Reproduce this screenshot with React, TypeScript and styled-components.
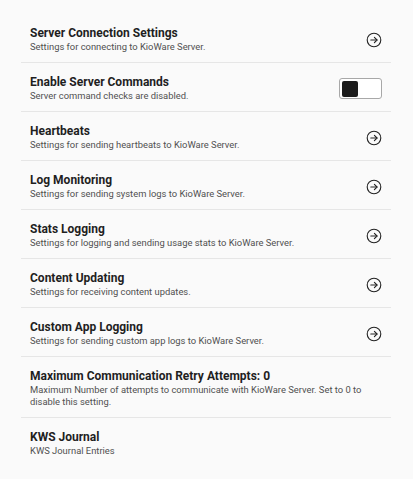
import React from 'react';
import styled, { createGlobalStyle } from 'styled-components';

const GlobalStyle = createGlobalStyle`
  html, body {
    margin: 0;
    padding: 0;
    background: #fafafa;
    font-family: Roboto, "Noto Sans", "Liberation Sans", sans-serif;
  }
`;

const Page = styled.div`
  padding: 14px 22px 0 21px;
  background: #fafafa;
  min-height: 479px;
  box-sizing: border-box;
`;

const Row = styled.div<{ $last?: boolean }>`
  display: flex;
  align-items: center;
  padding: 12px 9px 9px 9px;
  border-bottom: ${p => (p.$last ? 'none' : '1px solid #e6e6e6')};
`;

const TextBlock = styled.div`
  flex: 1;
  min-width: 0;
`;

const Title = styled.div`
  font-size: 12px;
  line-height: 15px;
  font-weight: 700;
  color: #1f1f1f;
`;

const Subtitle = styled.div`
  font-size: 9.4px;
  line-height: 12px;
  color: #505050;
`;

const IconWrapper = styled.div`
  display: flex;
  width: 16px;
  height: 16px;
  margin-left: 12px;
  color: #222;
`;

const Toggle = styled.div`
  box-sizing: border-box;
  width: 43px;
  height: 21px;
  border: 1.5px solid #a8a8a8;
  border-radius: 3px;
  background: #fff;
  padding: 1.5px;
  margin-left: 12px;
  display: flex;
`;

const Knob = styled.div`
  width: 16px;
  height: 100%;
  border-radius: 2px;
  background: #1c1c1c;
`;

const ArrowCircle = () => (
  <svg width="16" height="16" viewBox="0 0 16 16" fill="none" stroke="currentColor" strokeWidth="1.1" strokeLinecap="round" strokeLinejoin="round">
    <circle cx="8" cy="8" r="6.8" />
    <path d="M4.8 8h6.2" />
    <path d="M8.4 5.3 11 8l-2.6 2.7" />
  </svg>
);

type Item = {
  title: string;
  subtitle: string;
  kind?: 'arrow' | 'toggle' | 'none';
};

const items: Item[] = [
  { title: 'Server Connection Settings', subtitle: 'Settings for connecting to KioWare Server.', kind: 'arrow' },
  { title: 'Enable Server Commands', subtitle: 'Server command checks are disabled.', kind: 'toggle' },
  { title: 'Heartbeats', subtitle: 'Settings for sending heartbeats to KioWare Server.', kind: 'arrow' },
  { title: 'Log Monitoring', subtitle: 'Settings for sending system logs to KioWare Server.', kind: 'arrow' },
  { title: 'Stats Logging', subtitle: 'Settings for logging and sending usage stats to KioWare Server.', kind: 'arrow' },
  { title: 'Content Updating', subtitle: 'Settings for receiving content updates.', kind: 'arrow' },
  { title: 'Custom App Logging', subtitle: 'Settings for sending custom app logs to KioWare Server.', kind: 'arrow' },
  {
    title: 'Maximum Communication Retry Attempts: 0',
    subtitle: 'Maximum Number of attempts to communicate with KioWare Server. Set to 0 to disable this setting.',
    kind: 'none',
  },
  { title: 'KWS Journal', subtitle: 'KWS Journal Entries', kind: 'none' },
];

export default () => {
  return (
    <Page>
      <GlobalStyle />
      {items.map((item, i) => (
        <Row key={item.title} $last={i === items.length - 1}>
          <TextBlock>
            <Title>{item.title}</Title>
            <Subtitle>{item.subtitle}</Subtitle>
          </TextBlock>
          {item.kind === 'arrow' && (
            <IconWrapper>
              <ArrowCircle />
            </IconWrapper>
          )}
          {item.kind === 'toggle' && (
            <Toggle>
              <Knob />
            </Toggle>
          )}
        </Row>
      ))}
    </Page>
  );
};
